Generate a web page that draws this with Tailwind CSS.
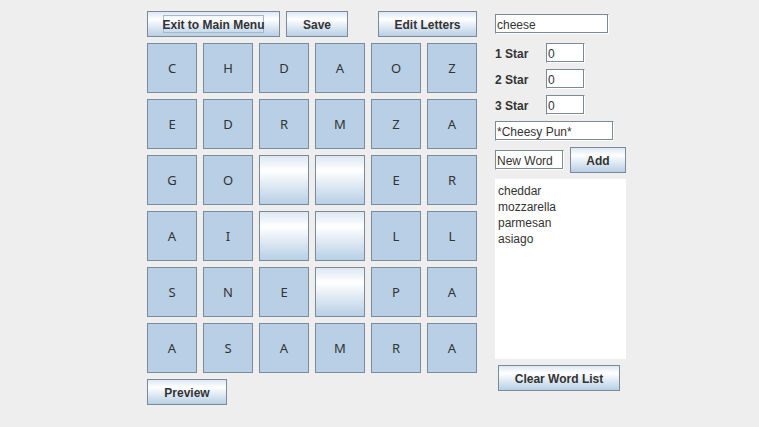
<!DOCTYPE html>
<html lang="en">
<head>
<meta charset="utf-8">
<meta name="viewport" content="width=device-width, initial-scale=1">
<title>Word Puzzle Builder</title>
<script src="https://cdn.jsdelivr.net/npm/@tailwindcss/browser@4"></script>
</head>
<body class="min-h-screen bg-[#eeeeee] font-['Liberation_Sans',Arial,sans-serif] text-xs text-[#333333]">
<main class="flex items-start justify-center gap-[18px] pt-[11px] pl-3.5">
  <section class="flex flex-col gap-1.5" aria-label="Board">
    <div class="flex gap-1.5">
      <button type="button" class="h-[26px] w-[133px] border border-[#7a8a99] bg-linear-to-b from-[#dde8f3] via-white via-30% to-[#b8cfe5] px-[15px] font-bold"><span class="flex h-[18px] justify-center border border-[#a3b8cc] pt-px leading-4 whitespace-nowrap">Exit to Main Menu</span></button>
      <button type="button" class="h-[26px] w-[62px] border border-[#7a8a99] bg-linear-to-b from-[#dde8f3] via-white via-30% to-[#b8cfe5] pt-0.5 font-bold">Save</button>
      <button type="button" class="ml-auto h-[26px] w-[99px] border border-[#7a8a99] bg-linear-to-b from-[#dde8f3] via-white via-30% to-[#b8cfe5] pt-0.5 font-bold">Edit Letters</button>
    </div>
    <div id="board" class="grid grid-cols-[repeat(6,50px)] gap-1.5 font-['Noto_Sans',sans-serif] text-[13px]"></div>
    <button type="button" class="h-[26px] w-20 self-start border border-[#7a8a99] bg-linear-to-b from-[#dde8f3] via-white via-30% to-[#b8cfe5] pt-0.5 font-bold">Preview</button>
  </section>

  <form class="flex w-[131px] flex-col items-start gap-1.5 pt-[3px]">
    <input type="text" aria-label="Puzzle name" value="cheese" class="mb-[3px] h-5 w-[114px] border border-[#7a8a99] border-r-white border-b-white bg-white px-px pt-px shadow-[inset_-1px_-1px_0_#7a8a99] outline-none">
    <div class="grid grid-cols-[51px_39px] items-center gap-y-1.5">
      <label for="star1" class="pt-0.5 font-bold">1 Star</label>
      <input id="star1" type="text" value="0" class="h-5 w-full border border-[#7a8a99] border-r-white border-b-white bg-white px-px pt-px shadow-[inset_-1px_-1px_0_#7a8a99] outline-none">
      <label for="star2" class="pt-0.5 font-bold">2 Star</label>
      <input id="star2" type="text" value="0" class="h-5 w-full border border-[#7a8a99] border-r-white border-b-white bg-white px-px pt-px shadow-[inset_-1px_-1px_0_#7a8a99] outline-none">
      <label for="star3" class="pt-0.5 font-bold">3 Star</label>
      <input id="star3" type="text" value="0" class="h-5 w-full border border-[#7a8a99] border-r-white border-b-white bg-white px-px pt-px shadow-[inset_-1px_-1px_0_#7a8a99] outline-none">
    </div>
    <input type="text" aria-label="Pun" value="*Cheesy Pun*" class="h-5 w-[119px] border border-[#7a8a99] border-r-white border-b-white bg-white px-px pt-px shadow-[inset_-1px_-1px_0_#7a8a99] outline-none">
    <div class="flex w-full items-center gap-1.5">
      <input type="text" aria-label="New word" value="New Word" class="h-5 w-[69px] border border-[#7a8a99] border-r-white border-b-white bg-white px-px pt-px shadow-[inset_-1px_-1px_0_#7a8a99] outline-none">
      <button type="button" class="h-[26px] flex-1 border border-[#7a8a99] bg-linear-to-b from-[#dde8f3] via-white via-30% to-[#b8cfe5] pt-0.5 font-bold">Add</button>
    </div>
    <select multiple aria-label="Word list" class="h-[180px] w-full appearance-none overflow-hidden bg-white px-[3px] pt-[5px] outline-none">
      <option class="h-4 p-0 leading-4">cheddar</option>
      <option class="h-4 p-0 leading-4">mozzarella</option>
      <option class="h-4 p-0 leading-4">parmesan</option>
      <option class="h-4 p-0 leading-4">asiago</option>
    </select>
    <button type="button" class="ml-[3px] h-[26px] w-[122px] border border-[#7a8a99] bg-linear-to-b from-[#dde8f3] via-white via-30% to-[#b8cfe5] pt-0.5 font-bold">Clear Word List</button>
  </form>
</main>
<script>
  const rows = ["CHDAOZ", "EDRMZA", "GO  ER", "AI  LL", "SNE PA", "ASAMRA"];
  const board = document.getElementById("board");
  for (const letter of rows.join("")) {
    const tile = document.createElement("button");
    tile.type = "button";
    if (letter === " ") {
      tile.className = "h-[50px] border border-[#7a8a99] bg-linear-to-b from-[#dde8f3] via-white via-30% to-[#b8cfe5]";
      tile.setAttribute("aria-label", "Empty tile");
    } else {
      tile.className = "h-[50px] border border-[#7a8a99] bg-[#b8cfe5] pt-0.5";
      tile.textContent = letter;
    }
    board.append(tile);
  }
</script>
</body>
</html>
